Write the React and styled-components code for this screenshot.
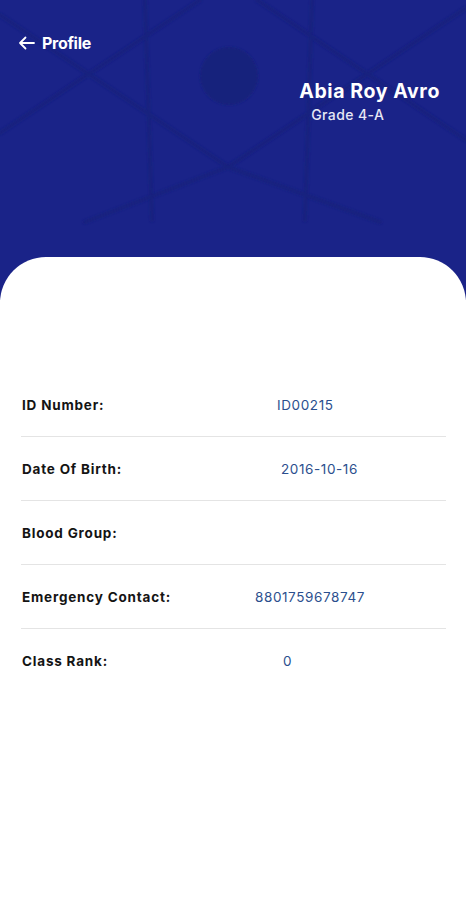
import React from "react";
import styled, { createGlobalStyle } from "styled-components";

const Global = createGlobalStyle`
  html, body { margin: 0; padding: 0; background: #ffffff; }
  body { font-family: "Inter", "Noto Sans", sans-serif; }
  * { box-sizing: border-box; }
`;

const Page = styled.div`
  width: 466px;
  min-height: 900px;
  display: flex;
  flex-direction: column;
  background: #ffffff;
  overflow: hidden;
`;

const Header = styled.header`
  position: relative;
  height: 300px;
  background: #1a2388;
  display: flex;
  flex-direction: column;
  padding: 31px 26px 0 18px;
  overflow: hidden;
`;

const Pattern = styled.svg`
  position: absolute;
  inset: 0;
  pointer-events: none;
`;

const TopBar = styled.div`
  position: relative;
  display: flex;
  align-items: center;
  gap: 7px;
  color: #ffffff;
  height: 24px;
`;

const Title = styled.span`
  font-family: "Inter", sans-serif;
  font-weight: 700;
  font-size: 16px;
  letter-spacing: -0.3px;
`;

const NameBlock = styled.div`
  position: relative;
  align-self: flex-end;
  margin-top: 24px;
  display: flex;
  flex-direction: column;
  color: #ffffff;
`;

const Name = styled.div`
  font-family: "Inter", sans-serif;
  font-weight: 700;
  font-size: 19.5px;
  line-height: 24px;
  letter-spacing: 0.6px;
`;

const Grade = styled.div`
  padding-left: 12px;
  font-family: "Inter", sans-serif;
  font-weight: 500;
  font-size: 14px;
  line-height: 24px;
  letter-spacing: 0.4px;
  color: #e6e8f5;
`;

const Card = styled.main`
  position: relative;
  margin-top: -43px;
  flex: 1;
  background: #ffffff;
  border-radius: 46px 46px 0 0;
  padding: 116px 20px 0 21px;
  display: flex;
  flex-direction: column;
`;

const Row = styled.div`
  display: grid;
  grid-template-columns: ${(p) => p.$valueX - 21}px 1fr;
  align-items: center;
  height: 64px;
  border-bottom: ${(p) => (p.$last ? "none" : "1px solid #e4e4e4")};
`;

const Label = styled.span`
  padding-left: 1px;
  font-family: "Inter", sans-serif;
  font-weight: 700;
  font-size: 13.5px;
  color: #141414;
  letter-spacing: 0.8px;
  white-space: nowrap;
`;

const Value = styled.span`
  font-family: "Inter", sans-serif;
  font-weight: 400;
  font-size: 13.5px;
  color: #2b4f8e;
  letter-spacing: 0.6px;
`;

const rows = [
  { label: "ID Number:", value: "ID00215", x: 277 },
  { label: "Date Of Birth:", value: "2016-10-16", x: 281 },
  { label: "Blood Group:", value: "", x: 281 },
  { label: "Emergency Contact:", value: "8801759678747", x: 255 },
  { label: "Class Rank:", value: "0", x: 283 },
];

function BackArrow() {
  return (
    <svg width="17" height="14" viewBox="0 0 17 14" fill="none">
      <path d="M16 7H2M7.5 1.5L2 7l5.5 5.5" stroke="#fff" strokeWidth="1.8" strokeLinecap="round" strokeLinejoin="round" />
    </svg>
  );
}

export default function App() {
  return (
    <Page>
      <Global />
      <Header>
        <Pattern width="466" height="300" viewBox="0 0 466 300">
          <defs>
            <filter id="soft" x="-10%" y="-10%" width="120%" height="120%">
              <feGaussianBlur stdDeviation="1.2" />
            </filter>
          </defs>
          <g stroke="#15207a" strokeWidth="4" fill="none" strokeLinecap="round" opacity="0.65" filter="url(#soft)">
            <line x1="145" y1="0" x2="152" y2="220" />
            <line x1="312" y1="0" x2="305" y2="220" />
            <line x1="0" y1="15" x2="228" y2="167" />
            <line x1="228" y1="167" x2="466" y2="8" />
            <line x1="0" y1="133" x2="200" y2="0" />
            <line x1="257" y1="0" x2="466" y2="140" />
            <line x1="228" y1="167" x2="85" y2="222" />
            <line x1="228" y1="167" x2="380" y2="222" />
          </g>
          <circle cx="229" cy="76" r="29" fill="#17217c" filter="url(#soft)" />
        </Pattern>
        <TopBar>
          <BackArrow />
          <Title>Profile</Title>
        </TopBar>
        <NameBlock>
          <Name>Abia Roy Avro</Name>
          <Grade>Grade 4-A</Grade>
        </NameBlock>
      </Header>
      <Card>
        {rows.map((r, i) => (
          <Row key={r.label} $valueX={r.x} $last={i === rows.length - 1}>
            <Label>{r.label}</Label>
            <Value>{r.value}</Value>
          </Row>
        ))}
      </Card>
    </Page>
  );
}
